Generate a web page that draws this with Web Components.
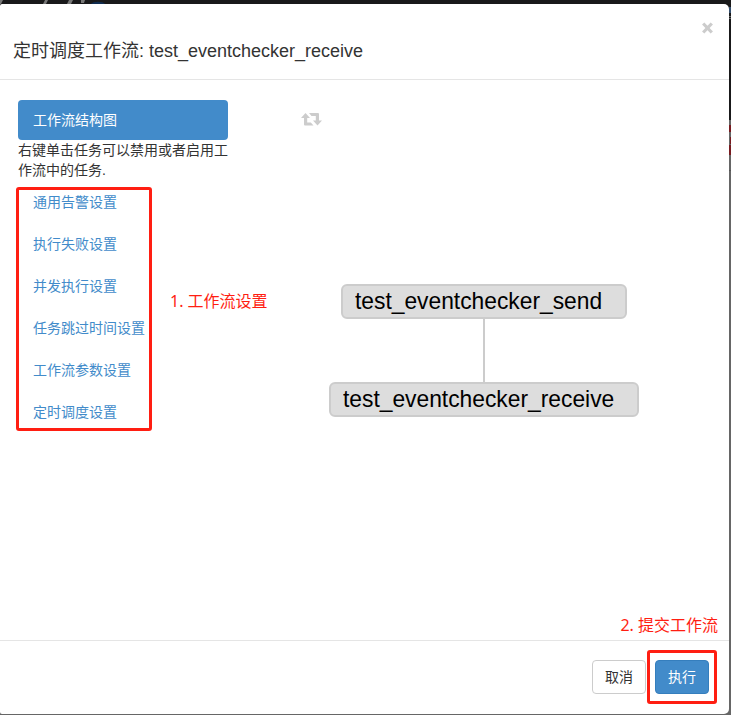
<!DOCTYPE html>
<html lang="zh-CN">
<head>
<meta charset="utf-8">
<title>定时调度工作流</title>
<style>
html,body{margin:0;height:100%;overflow:hidden}
body{background:#666;font:14px/20px "Liberation Sans","Noto Sans CJK SC",sans-serif;color:#333}
</style>
</head>
<body>
<schedule-page></schedule-page>
<script>
function define(name, html) {
  const t = document.createElement('template');
  t.innerHTML = html;
  customElements.define(name, class extends HTMLElement {
    constructor() {
      super();
      this.attachShadow({mode: 'open'}).append(t.content.cloneNode(true));
    }
  });
}

define('page-backdrop', `<style>
:host{position:absolute;inset:0;display:block}
svg{display:block}
</style>
<svg width="731" height="715" viewBox="0 0 731 715">
<path fill="#666" d="M0 0h731v715H0z"/><path fill="#19191a" d="M0 0h731v120H0z"/>
<path d="M0 0h3l-2 4H0zM45 0h3l-2 4h-3zM69 0h4l-2 4h-4zM81 0h4l-1 3h-3z" fill="#777"/>
<path d="M91 4c2-3 12-3 14 0z" fill="#102c50"/>
<path d="M729 7h2v6h-2z" fill="#36506e"/><path d="M729 16h2v1h-2zM729 18h2v1h-2z" fill="#666"/>
<path d="M729 125h2v7h-2zM729 145h2v10h-2z" fill="#781b20"/><path d="M730 137h1v7h-1z" fill="#781b20"/>
<path d="M729 170h2v1h-2z" fill="#555"/>
</svg>`);

define('modal-header', `<style>
:host{display:flex;height:75px;box-sizing:content-box;border-bottom:1px solid #e5e5e5;padding:0 15px 0 13px;justify-content:space-between}
.title{padding-top:37px;font-size:18px;line-height:20px;color:#333;white-space:nowrap}
svg{margin:18px 0 0;width:13px;height:12px}
</style>
<div class="title"><slot></slot></div>
<svg viewBox="0 0 13 12"><path d="M2.2 1.500 10.800 10.500M10.800 1.500 2.200 10.500" stroke="#ccc" stroke-width="3.2"/></svg>`);

define('nav-item', `<style>
:host{display:block;box-sizing:border-box;height:40px;padding:10px 15px;border-radius:4px;color:#428bca;white-space:nowrap}
:host([active]){background:#428bca;color:#fff}
</style><slot></slot>`);

define('nav-hint', `<style>:host{display:block;width:214px;height:40px;line-height:20px;color:#333}</style><slot></slot>`);

define('nav-group', `<style>
:host{display:block;box-sizing:border-box;width:136px;height:244px;margin:7px 0 0 -2px;border:3px solid #ff1e12;border-radius:3px}
.items{display:flex;flex-direction:column;gap:2px;margin:-8px 0 0 -1px}
</style><div class="items"><slot></slot></div>`);

define('side-nav', `<style>:host{display:block;width:210px;flex:none;padding:20px 0 0 18px}</style><slot></slot>`);

define('red-note', `<style>
:host{display:block;color:#ff1e12;font:16px/22px "Noto Sans","Noto Sans CJK SC",sans-serif;white-space:nowrap}
</style><slot></slot>`);

define('reset-icon', `<style>:host{display:block}svg{display:block}</style>
<svg width="21" height="13" viewBox="0 0 21 13"><path fill="#ccc" d="M4.500 0 9 5H6.200v4.500h3.600l2.700 3H4a1 1 0 0 1-1-1V5H0zM8 0h9a1 1 0 0 1 1 1v6.500h3L16.500 12.500 12 7.500h2.800V3h-4.300z"/></svg>`);

define('flow-node', `<style>
:host{position:absolute;box-sizing:border-box;height:34.5px;padding:0 12px;border:2px solid #ccc;border-radius:6px;background:#ddd;color:#000;font:24px/30px "Liberation Sans",sans-serif;white-space:nowrap}
span{display:inline-block;transform:scaleX(.95);transform-origin:0 50%}
</style><span><slot></slot></span>`);

define('flow-graph', `<style>
:host{display:block;position:relative;flex:1}
reset-icon{position:absolute;left:73px;top:33px}
.edge{position:absolute;left:255px;top:238px;width:2px;height:64px;background:#ccc}
.send{left:113px;top:204px;width:286px}
.receive{left:101px;top:302px;width:310px}
red-note{position:absolute;left:-58px;top:210px}
</style>
<reset-icon></reset-icon><div class="edge"></div>
<flow-node class="send">test_eventchecker_send</flow-node>
<flow-node class="receive">test_eventchecker_receive</flow-node>
<red-note>1. 工作流设置</red-note>`);

define('action-button', `<style>
:host{display:block;box-sizing:border-box;width:54px;height:34px;padding:6px 12px;border:1px solid #ccc;border-radius:4px;background:#fff;color:#333;line-height:20px;white-space:nowrap}
:host([primary]){background:#428bca;border-color:#357ebd;color:#fff}
</style><slot></slot>`);

define('modal-footer', `<style>
:host{display:flex;position:relative;height:73px;border-top:1px solid #e5e5e5;justify-content:flex-end;align-items:flex-start;gap:1px;padding-right:12px}
action-button{margin-top:19px}
.mark{box-sizing:border-box;width:70px;height:54px;margin-top:9px;border:3px solid #ff1e12;border-radius:3px;padding:7px 5px}
.mark action-button{margin:0}
red-note{position:absolute;right:11px;top:-27px}
</style>
<action-button>取消</action-button>
<div class="mark"><action-button primary>执行</action-button></div>
<red-note>2. 提交工作流</red-note>`);

define('schedule-modal', `<style>
:host{position:relative;display:flex;flex-direction:column;width:729px;height:710px;background:#fff;border-radius:2px 5px 5px 2px}
.body{display:flex;flex:1}
</style>
<modal-header>定时调度工作流: test_eventchecker_receive</modal-header>
<div class="body">
<side-nav>
<nav-item active>工作流结构图</nav-item>
<nav-hint>右键单击任务可以禁用或者启用工作流中的任务.</nav-hint>
<nav-group>
<nav-item>通用告警设置</nav-item><nav-item>执行失败设置</nav-item><nav-item>并发执行设置</nav-item>
<nav-item>任务跳过时间设置</nav-item><nav-item>工作流参数设置</nav-item><nav-item>定时调度设置</nav-item>
</nav-group>
</side-nav>
<flow-graph></flow-graph>
</div>
<modal-footer></modal-footer>`);

define('schedule-page', `<style>:host{display:block;position:relative;box-sizing:border-box;width:731px;height:715px;padding-top:4px}</style>
<page-backdrop></page-backdrop><schedule-modal></schedule-modal>`);
</script>
</body>
</html>
